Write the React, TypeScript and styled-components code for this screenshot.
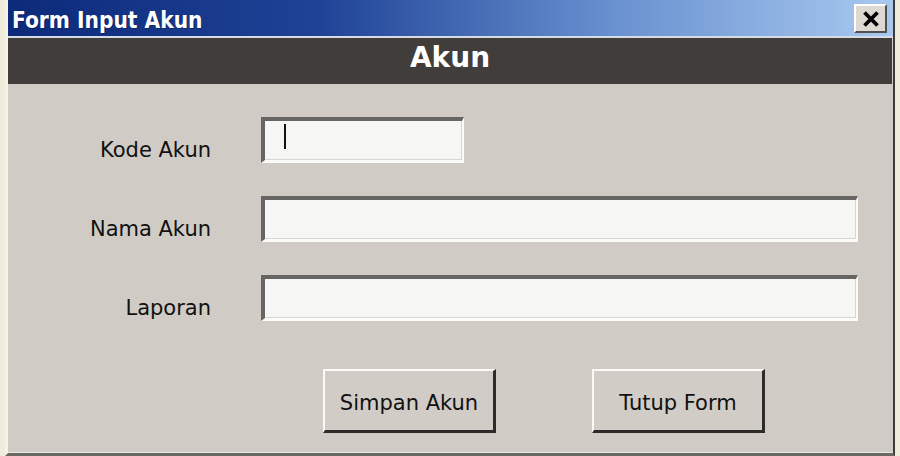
import React from "react";
import styled, { createGlobalStyle } from "styled-components";

const Global = createGlobalStyle`
  html, body { margin: 0; padding: 0; background: #efecdc; }
  body { width: 900px; height: 456px; overflow: hidden; }
  #root { width: 900px; height: 456px; }
`;

const Page = styled.div`
  display: flex;
  width: 900px;
  height: 456px;
  padding-left: 5px;
  box-sizing: border-box;
`;

const Window = styled.div`
  display: flex;
  flex-direction: column;
  width: 890px;
  height: 456px;
  box-sizing: border-box;
  border-left: 3px solid #f4f2ea;
  border-right: 2px solid #3c3a38;
  border-bottom: 3px solid #6a6865;
  background: #d0ccc5;
`;

const TitleBar = styled.div`
  height: 36px;
  flex: none;
  display: flex;
  align-items: center;
  justify-content: space-between;
  padding: 0 6px 0 4px;
  background: linear-gradient(90deg, #0d2a7a 0%, #1f4296 35%, #6890cf 68%, #a8c9ef 100%);
  border-bottom: 2px solid #d7dbe4;
`;

const Title = styled.span`
  font-family: "DejaVu Sans Condensed", "DejaVu Sans", sans-serif;
  font-weight: bold;
  font-size: 22.5px;
  padding-top: 3px;
  color: #ffffff;
  text-shadow: 1px 1px 0 rgba(0, 0, 0, 0.25);
`;

const CloseButton = styled.div`
  width: 33px;
  height: 29px;
  box-sizing: border-box;
  margin-top: 1px;
  display: flex;
  align-items: center;
  justify-content: center;
  background: #dcd9d2;
  border-top: 2px solid #ffffff;
  border-left: 2px solid #ffffff;
  border-right: 2px solid #505050;
  border-bottom: 2px solid #505050;
`;

const Header = styled.div`
  height: 46px;
  flex: none;
  box-sizing: border-box;
  padding-bottom: 8px;
  display: flex;
  align-items: center;
  justify-content: center;
  background: #413d3b;
  margin-right: 1px;
  font-family: "DejaVu Sans", sans-serif;
  font-weight: bold;
  font-size: 28px;
  color: #ffffff;
`;

const Body = styled.div`
  flex: 1;
  display: flex;
  flex-direction: column;
  padding: 33px 35px 0 0;
  border-bottom: 1px solid #ebe8e0;
`;

const Form = styled.div`
  display: grid;
  grid-template-columns: 203px 1fr;
  column-gap: 50px;
  row-gap: 33px;
  align-items: center;
`;

const Label = styled.div`
  font-family: "DejaVu Sans", sans-serif;
  font-size: 21px;
  color: #111111;
  text-align: right;
  padding-top: 19px;
`;

const Field = styled.div<{ $width?: number }>`
  height: 46px;
  width: ${(p) => (p.$width ? `${p.$width}px` : "100%")};
  box-sizing: border-box;
  display: flex;
  align-items: flex-start;
  background: #f6f6f4;
  border-top: 4px solid #676564;
  border-left: 4px solid #676564;
  border-right: 2px solid #fbfbf8;
  border-bottom: 3px solid #fbfbf8;
  box-shadow: inset 0 -1px 0 #d8d6d2, inset -1px 0 0 #d8d6d2;
`;

const Caret = styled.span`
  width: 2px;
  height: 25px;
  margin: 3px 0 0 19px;
  background: #111111;
`;

const Buttons = styled.div`
  display: flex;
  gap: 96px;
  padding-left: 315px;
  margin-top: 48px;
`;

const Button = styled.div`
  width: 173px;
  height: 64px;
  box-sizing: border-box;
  padding-top: 5px;
  display: flex;
  align-items: center;
  justify-content: center;
  background: #d1cdc6;
  border-top: 2px solid #fbfaf6;
  border-left: 2px solid #fbfaf6;
  border-right: 3px solid #2e2c2b;
  border-bottom: 3px solid #2e2c2b;
  font-family: "DejaVu Sans", sans-serif;
  font-size: 21px;
  color: #111111;
`;

export default function App() {
  return (
    <>
      <Global />
      <Page>
        <Window>
          <TitleBar>
            <Title>Form Input Akun</Title>
            <CloseButton>
              <svg width="20" height="18" viewBox="0 0 20 18">
                <path d="M3.5 2.5 L16.5 15.5 M16.5 2.5 L3.5 15.5" stroke="#000" strokeWidth="3.8" strokeLinecap="butt" />
              </svg>
            </CloseButton>
          </TitleBar>
          <Header>Akun</Header>
          <Body>
            <Form>
              <Label>Kode Akun</Label>
              <Field $width={203}>
                <Caret />
              </Field>
              <Label>Nama Akun</Label>
              <Field />
              <Label>Laporan</Label>
              <Field />
            </Form>
            <Buttons>
              <Button>Simpan Akun</Button>
              <Button>Tutup Form</Button>
            </Buttons>
          </Body>
        </Window>
      </Page>
    </>
  );
}
